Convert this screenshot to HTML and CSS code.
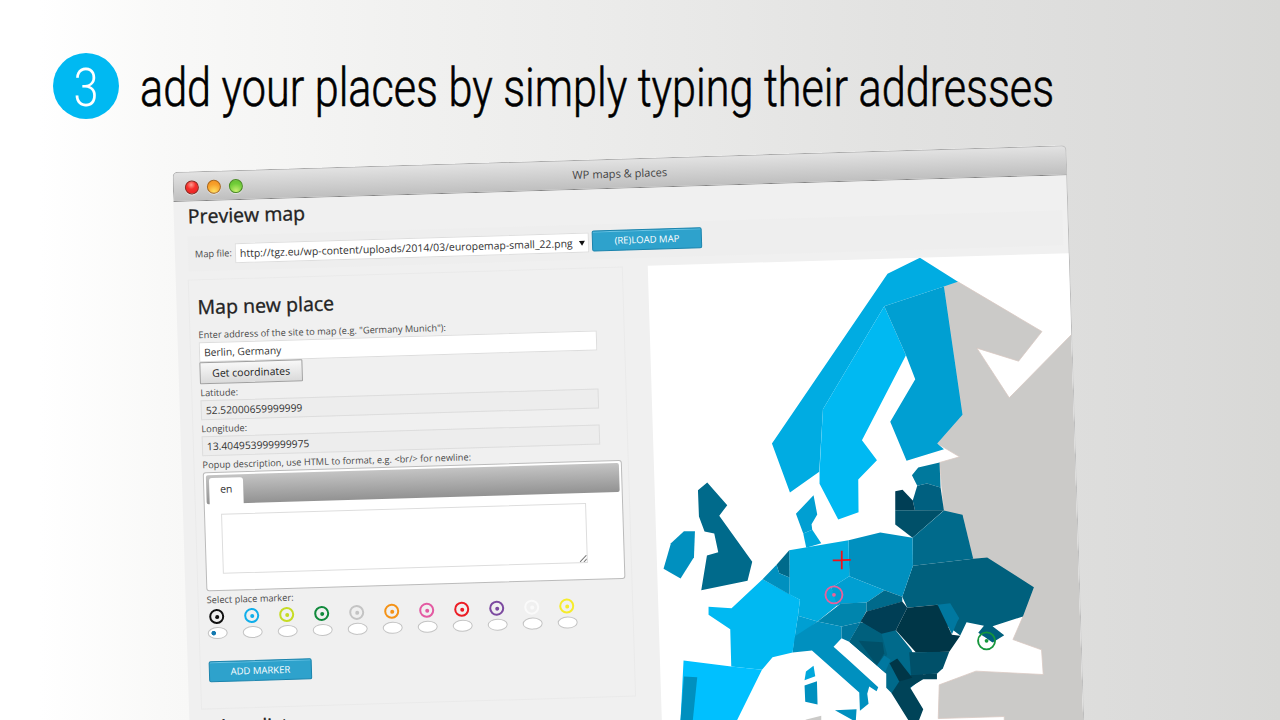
FILE: index.html
```
<!DOCTYPE html>
<html lang="en">
<head>
<meta charset="utf-8">
<title>WP maps &amp; places</title>
<link rel="stylesheet" href="styles.css">
</head>
<body>
<header class="headline">
  <div class="step"><svg width="66" height="66"><text x="20.500" y="52.500" textLength="25" lengthAdjust="spacingAndGlyphs">3</text></svg></div>
  <svg class="slogan" width="930" height="84"><text x="0" y="53" textLength="914" lengthAdjust="spacingAndGlyphs">add your places by simply typing their addresses</text></svg>
</header>
<main class="window">
  <div class="titlebar">
    <div class="lights"><i class="light red"></i><i class="light amber"></i><i class="light green"></i></div>
    <span class="title">WP maps &amp; places</span>
  </div>
  <h1 class="heading preview">Preview map</h1>
  <div class="filerow">
    <label class="label">Map file:</label>
    <div class="select"><span>http://tgz.eu/wp-content/uploads/2014/03/europemap-small_22.png</span><b class="caret"></b></div>
    <div class="primary">(RE)LOAD MAP</div>
  </div>
  <div class="columns">
    <div class="left">
      <section class="panel">
        <h2 class="heading">Map new place</h2>
        <div class="label address">Enter address of the site to map (e.g. "Germany Munich"):</div>
        <div class="field">Berlin, Germany</div>
        <div class="button">Get coordinates</div>
        <div class="label row">Latitude:</div>
        <div class="field readonly">52.52000659999999</div>
        <div class="label row">Longitude:</div>
        <div class="field readonly">13.404953999999975</div>
        <div class="label popup">Popup description, use HTML to format, e.g. &lt;br/&gt; for newline:</div>
        <div class="tabs">
          <div class="tabbar"><div class="tab">en</div></div>
          <div class="textarea"><svg width="7" height="7"><path d="M0 7L7 0M4 7L7 4" stroke="#777" fill="none"/></svg></div>
        </div>
        <div class="label select-label">Select place marker:</div>
        <div class="markers">
          <div class="marker black"><i></i><b class="on"></b></div>
          <div class="marker blue"><i></i><b></b></div>
          <div class="marker lime"><i></i><b></b></div>
          <div class="marker forest"><i></i><b></b></div>
          <div class="marker silver"><i></i><b></b></div>
          <div class="marker orange"><i></i><b></b></div>
          <div class="marker pink"><i></i><b></b></div>
          <div class="marker crimson"><i></i><b></b></div>
          <div class="marker violet"><i></i><b></b></div>
          <div class="marker white"><i></i><b></b></div>
          <div class="marker yellow"><i></i><b></b></div>
        </div>
        <div class="primary add">ADD MARKER</div>
      </section>
      <h2 class="heading next">Place list</h2>
    </div>
    <svg class="map" width="422" height="492">
      <g transform="matrix(.99907 .02997 -.03097 .99907 -639.659 -285.189)">
        <path fill="#cbcac8" stroke="#d9c9c3" stroke-width=".8" d="M958.700 282L1042.700 331.700 1019.300 361.300 977.700 348.300 1010 398 1071 336 1100 306V740H1005L1005 716.700 939 718.700 940 685 976.700 671.300 1044 674.700 1042.300 650 1013.700 639.700 1023.700 616.700 1034.700 587.300 988 557.700 974 559 963.300 515 944.700 510.700 940.300 462.700 960.300 457 938 443.700 963.300 415 944.700 286.700Z"/>
        <path fill="#cbcac8" d="M806 720L822 716V722Z"/>
        <path fill="#00ace2" d="M920.700 258L888.300 274 772.700 443.700 790.700 492.700 820 472 823.700 409.300 885 306.300 944.700 286.700 958.700 282Z"/>
        <path fill="#00b9f2" d="M885 306.300L906.700 355.300 862.700 440.300 877.700 460.300 859 479.700 859.300 512.500 839 519.700 820.300 484V472L823.700 409.300Z"/>
        <path fill="#009fd2" d="M885 306.300L944.700 286.700 963.300 415 938 443.700 944.700 449.300 907.300 461 891 422 916 379.300 906.700 355.300Z"/>
        <path fill="#00799d" d="M940.300 462.700L919 467.700 912.700 475.300 918 486 927.700 483.700 941.300 487.700Z"/>
        <path fill="#006080" d="M918 486L913.500 500.700 915.700 510.500 944.700 510.700 941.300 487.700 927.700 483.700Z"/>
        <path fill="#003e55" d="M896 491.300L903.300 490 913.500 500.700 915.700 510.500H896Z"/>
        <path fill="#005069" d="M896 510.400H944.700L913.300 538 896 524.700Z"/>
        <path fill="#006a8b" d="M944.700 510.700L963.300 515 974 559 913.700 566 913.300 538Z"/>
        <path fill="#00607d" d="M913.700 566L974 559 988 557.700 1034.700 587.300 1023.700 616.700 993.300 626.300 1005 635.300 993.300 642.700 979 633 984.700 626 967.300 622.300 961 635.700 940 620 938.300 605 908 608 903 597Z"/>
        <path fill="#0078a0" d="M938.300 605L951 603.300 960 618.300 958 622 952.700 634.500Z"/>
        <path fill="#0090bf" d="M849.300 540.300L881 532.700 913.300 538 913.700 566 903 597 885.300 590.300 850 576.500Z"/>
        <path fill="#00acdf" d="M790 550.300L849.300 540.300 850 576.500 832 588 840 604 818.300 621.700 798.700 616 800.700 600 790.300 594.700Z"/>
        <path fill="#00a8dc" d="M804 533.700L813 530 822 543.500 807 548Z"/>
        <path fill="#009fd2" d="M814.300 495.300L818 514.700 812.300 524.300 813 530 804 533.700 796.700 514ZM850 576.500L885.300 590.300 867.300 602.700 842 604 838 606 832 588ZM798.700 616L818.300 621.700 795 640Z"/>
        <path fill="#0085ad" d="M841.700 603.700L867.300 602.700V611L861.300 622.300 842.300 626.700 818.300 621.700Z"/>
        <path fill="#0090bf" d="M818.300 621.700L842.300 626.700V638.300L834.300 647 850 661 879 687.300 877.300 691.300 870 686.700 868 694 869.300 704 860.700 711 860 692.700 812.700 650.700 793.300 652.700 795 637Z"/>
        <path fill="#006a8b" d="M861.300 622.300L850 642 887 674V688L893 694 909 690 925 677 912 650 896 630Z"/>
        <path fill="#0078a0" d="M842.300 626.700L861.300 622.300 850 642 842.300 638.300Z"/>
        <path fill="#00607d" d="M861.300 622.300L850 642 877.700 665.700 888 655 882.300 634Z"/>
        <path fill="#005069" d="M859.300 641L883.300 642.300 885 653.300 877.700 665.700Z"/>
        <path fill="#0078a0" d="M885 655.700L891.300 660 885.700 672.700 877.700 665.700Z"/>
        <path fill="#006a8b" d="M885.300 590.300L903 597V602L867.300 612V602.700Z"/>
        <path fill="#003e55" d="M867.300 611.700L903 601.700 908 608 896.700 630.300 882.300 634 861.300 621.700Z"/>
        <path fill="#003647" d="M908 608L938.300 605 952.700 635 961 636 950 652 916.700 652.700 896.700 630.300Z"/>
        <path fill="#005069" d="M910 652.500L950 652 943.700 668.300 937.700 674 911.700 675Z"/>
        <path fill="#004358" d="M937.700 673.700V679.500H924L910.700 687.300 924 709.300 918 725H912L892.300 693.300 900 681.700 912.700 675Z"/>
        <path fill="#003647" d="M890.300 663.300L898 658.700 913 678 900 681.700Z"/>
        <path fill="#006a8b" d="M708 482.700L728 505.300 720 516 753 562 748.300 581 702 590.300 707.700 555.700 719 552.300 715 533.700 705.300 531.700 699.700 516.700 698.700 490.300Z"/>
        <path fill="#0090bf" d="M684.700 531.300H695.700L694.700 557.300 681.300 578.700 664.300 569 671.700 543.300Z"/>
        <path fill="#00b9f2" d="M763.300 579.300L800.700 600 798.700 616 793.300 652.700 773.300 657.300 762.700 670 732 666.700 731 629.300 709.300 615V607L732.300 608.300Z"/>
        <path fill="#006a8b" d="M790 550.300L790.300 577.700 780 573.300 777.300 565Z"/>
        <path fill="#0090bf" d="M777.300 565L780 573.300 790.300 577.700V594.700L763.300 579.300Z"/>
        <path fill="#00c0ff" d="M684.300 660.700L732 666.700 762.700 670 735 726H681Z"/>
        <path fill="#0090bf" d="M684.700 676.700L698 677.300 693 726H680.800Z"/>
        <path fill="#00a8dc" d="M814.300 666L816 676.300 805.300 680.300 806.700 671.700Z"/>
        <path fill="#0090bf" d="M817.700 681.300L818.300 704.700 806 702 805.300 685.700ZM835.700 710.300L857.300 709.300 856.500 722Z"/>
        <path stroke="#f01018" stroke-width="1.800" d="M833.500 560.600L851.500 560M842.500 551V569.500"/>
        <g fill="none" stroke-width="1.900"><circle cx="834.700" cy="595" r="8.500" stroke="#e8609c"/><circle cx="987.300" cy="641" r="8.500" stroke="#16963c"/></g>
        <path fill="#fff" d="M980 638L985 637 991 642 990 645 985 645 981 642Z"/>
        <circle cx="834.700" cy="595" r="1.900" fill="#f06098"/><circle cx="987.300" cy="641" r="1.900" fill="#16963c"/>
      </g>
    </svg>
  </div>
</main>
</body>
</html>
```
FILE: styles.css
```
* { box-sizing: border-box; }
body {
  margin: 0;
  width: 1280px;
  height: 720px;
  overflow: hidden;
  font-family: "Open Sans", sans-serif;
  background: linear-gradient(90deg, #fff 0, #fff 40px, #f9f9f8 160px, #f1f1f0 400px, #ebebea 620px, #e2e2e1 900px, #dbdbda 1180px, #d8d8d6 1280px);
}
.headline { display: flex; gap: 21px; padding: 53.400px 0 0 53.400px; height: 172px; }
.step { width: 66px; height: 66px; border-radius: 50%; background: #00b9f2; }
.step svg, .slogan { display: block; overflow: visible; }
.headline text { font-family: Roboto, "Liberation Sans", Arial, sans-serif; font-weight: 300; font-size: 53px; fill: #000; stroke: #000; stroke-width: .6px; }
.headline .step text { fill: #fff; stroke: none; }
.window {
  width: 894px;
  height: 590px;
  margin-left: 172px;
  transform-origin: 0 0;
  transform: matrix(1, -.03, .031, 1, .4, 0);
  background: #f0f0f0;
  border-radius: 5px 5px 0 0;
  border-right: 1px solid #bdbdbd;
  overflow: hidden;
}
.titlebar {
  display: flex;
  align-items: center;
  width: 894px;
  height: 30px;
  padding: 0 11px;
  border: 1px solid #a9a9a9;
  border-bottom-color: #858585;
  border-radius: 5px 5px 0 0;
  background: linear-gradient(#e2e2e2, #bfbfbf);
}
.lights { display: flex; gap: 8px; width: 80px; padding-top: 1px; }
.light { width: 14px; height: 14px; border-radius: 50%; border: 1px solid #8a2a20; box-shadow: 0 1px 1px #fff8; }
.red { background: radial-gradient(circle at 45% 28%, #ff9c90, #f5302c 40%, #e81e20); }
.amber { border-color: #a8661c; background: radial-gradient(circle at 50% 90%, #ffe060, #f7a02a 60%, #f39020); }
.green { border-color: #4a8a24; background: radial-gradient(circle at 50% 90%, #c8f070, #70cc38 60%, #64bc30); }
.title { flex: 1; margin: -2px 80px 0 0; text-align: center; font-size: 11.100px; color: #444; }
.heading { margin: 0; font-size: 19.500px; line-height: 26px; font-weight: 400; -webkit-text-stroke: .35px #222; color: #222; white-space: nowrap; }
.preview { height: 35px; padding: 2px 0 0 14px; }
.filerow { display: flex; height: 35px; margin-left: 13px; width: 875px; padding: 6px 0 0 7px; background: #eeeeee; }
.label { font-size: 9.250px; line-height: 12px; color: #4a4a4a; white-space: nowrap; }
.filerow .label { width: 40px; padding-top: 6px; }
.select {
  display: flex;
  align-items: center;
  width: 354px;
  height: 20px;
  margin-top: 2px;
  padding-left: 4px;
  background: #fff;
  border: 1px solid #ddd;
  font-size: 10.450px;
  color: #333;
  white-space: nowrap;
}
.select span { width: 339px; margin-top: -1px; }
.caret { border: 3px solid transparent; border-top: 5px solid #111; border-bottom: 0; }
.primary {
  width: 110px;
  height: 21px;
  margin-left: 3px;
  border: 1px solid #1b84ad;
  border-radius: 2px;
  background: #2ea2cc;
  box-shadow: inset 0 1px 0 #6cc4e4;
  color: #fff;
  font-size: 9.500px;
  line-height: 19px;
  text-align: center;
}
.columns { display: flex; height: 490px; padding: 8px 0 0 12px; overflow: hidden; }
.left { flex: none; width: 460px; }
.panel { width: 435px; height: 430px; border: 1px solid #eaeaea; padding: 14px 0 0 8px; }
.address { padding-top: 9px; height: 22px; }
.field {
  width: 398px;
  height: 20px;
  padding-left: 4px;
  border: 1px solid #ddd;
  background: #fff;
  font-size: 10.250px;
  line-height: 18px;
  color: #333;
}
.button {
  width: 103px;
  height: 22px;
  border: 1px solid #a0a0a0;
  border-radius: 1px;
  background: linear-gradient(#f8f8f8, #dadada);
  color: #222;
  font-size: 10.500px;
  line-height: 20px;
  text-align: center;
}
.row { height: 16px; padding-top: 3px; }
.readonly { background: #ededed; }
.popup { height: 16px; padding-top: 3px; }
.tabs { width: 419px; height: 119px; padding: 2px; border: 1px solid #bbb; border-radius: 3px; background: #fff; }
.tabbar { height: 29px; padding: 3px 0 0 3px; border-radius: 2px; background: linear-gradient(#c4c4c4, #929292); }
.tab { width: 34px; height: 27px; border-radius: 3px 3px 0 0; background: #fff; font-size: 10.500px; line-height: 22px; text-align: center; color: #333; }
.textarea { display: flex; align-items: flex-end; justify-content: flex-end; width: 365px; height: 60px; margin: 10px 0 0 14px; border: 1px solid #ddd; }
.select-label { padding-top: 3px; height: 18px; }
.markers { display: flex; }
.marker { display: flex; flex-direction: column; align-items: center; gap: 3px; width: 35.050px; margin-left: -8px; margin-right: 8px; }
.marker i { width: 15px; height: 15px; border: 2px solid; border-radius: 50%; padding: 3.500px; background-clip: content-box; background-color: currentColor; }
.marker b { width: 20px; height: 12px; border: 1px solid #c3c3c3; border-radius: 50%; background: #fff; }
.marker b.on { background: radial-gradient(circle at 5px 5px, #1379b0 2px, #fff 2.600px); }
.black { color: #111; }
.blue { color: #10aeea; }
.lime { color: #c6dc24; }
.forest { color: #118a3c; }
.silver { color: #c4c4c4; }
.orange { color: #f49216; }
.pink { color: #e35aa2; }
.crimson { color: #ec1c24; }
.violet { color: #7c4aa0; }
.white { color: #fafafa; }
.yellow { color: #f6ec2c; }
.add { width: 103px; margin: 22px 0 0; }
.next { padding: 5px 0 0 8px; }
.map { flex: none; display: block; background: #fff; }
```
